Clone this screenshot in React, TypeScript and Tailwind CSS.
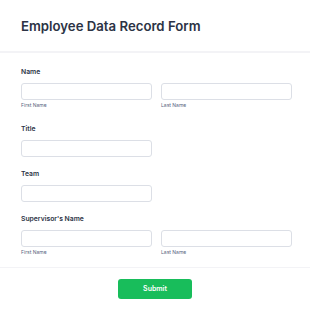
import React from "react";

function Field({ label, children }: { label: string; children: React.ReactNode }) {
  return (
    <div className="flex flex-col">
      <label className="mb-[6px] text-[6.8px] font-semibold leading-[10px] text-[#2c3345]">{label}</label>
      {children}
    </div>
  );
}

function Input() {
  return <div className="h-[17px] w-[131px] rounded-[3px] border border-[#dcdfe6] bg-white" />;
}

function NameRow() {
  return (
    <div className="flex gap-[9px] pb-[4px]">
      <div className="flex flex-col">
        <Input />
        <span className="mt-[2px] text-[5px] leading-[6px] text-[#57647e]">First Name</span>
      </div>
      <div className="flex flex-col">
        <Input />
        <span className="mt-[2px] text-[5px] leading-[6px] text-[#57647e]">Last Name</span>
      </div>
    </div>
  );
}

export default function App() {
  return (
    <div className="h-[316px] w-[310px] overflow-hidden bg-white font-['Inter',sans-serif]">
      <div className="px-[21px] pb-[15px] pt-[16px]">
        <h1 className="text-[13.2px] font-semibold leading-[20px] text-[#2c3345]">Employee Data Record Form</h1>
      </div>
      <div className="h-[2px] bg-[#f3f3f6]" />
      <div className="flex flex-col gap-[12px] px-[21px] pt-[14px]">
        <Field label="Name">
          <NameRow />
        </Field>
        <Field label="Title">
          <Input />
        </Field>
        <Field label="Team">
          <Input />
        </Field>
        <Field label="Supervisor's Name">
          <NameRow />
        </Field>
      </div>
      <div className="mt-[8px] h-px bg-[#f3f3f6]" />
      <div className="flex justify-center pt-[11px]">
        <button className="h-[20px] w-[74px] rounded-[3px] bg-[#18bd5b] text-[7px] font-semibold text-white">
          Submit
        </button>
      </div>
    </div>
  );
}
